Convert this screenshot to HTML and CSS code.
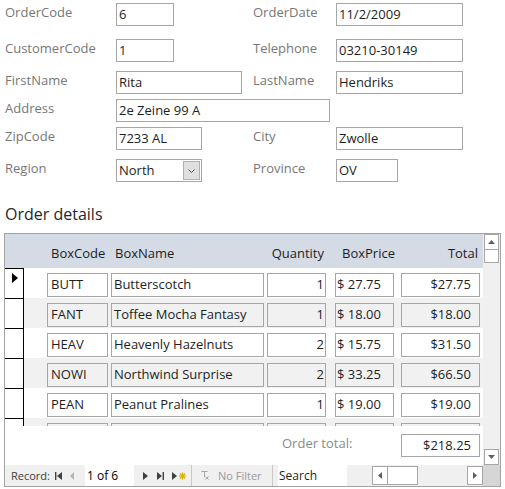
FILE: index.html
```html
<!DOCTYPE html>
<html>
<head>
<meta charset="utf-8">
<link rel="stylesheet" href="styles.css">
</head>
<body>
<div class="form">
  <div class="row r1">
    <span class="lbl">OrderCode</span>
    <span class="box w58">6</span>
    <span class="lbl">OrderDate</span>
    <span class="box w127">11/2/2009</span>
  </div>
  <div class="row r2">
    <span class="lbl">CustomerCode</span>
    <span class="box w58">1</span>
    <span class="lbl">Telephone</span>
    <span class="box w127">03210-30149</span>
  </div>
  <div class="row r3">
    <span class="lbl">FirstName</span>
    <span class="box w126">Rita</span>
    <span class="lbl">LastName</span>
    <span class="box w127">Hendriks</span>
  </div>
  <div class="row r4">
    <span class="lbl">Address</span>
    <span class="box w214 span3">2e Zeine 99 A</span>
  </div>
  <div class="row r5">
    <span class="lbl">ZipCode</span>
    <span class="box w86">7233 AL</span>
    <span class="lbl">City</span>
    <span class="box w127">Zwolle</span>
  </div>
  <div class="row r6">
    <span class="lbl">Region</span>
    <span class="combo">
      <span class="combo-val">North</span>
      <span class="combo-btn"><svg width="7" height="4" viewBox="0 0 7 4"><path d="M0.5 0.5 L3.5 3.5 L6.5 0.5" fill="none" stroke="#505050" stroke-width="1"/></svg></span>
    </span>
    <span class="lbl">Province</span>
    <span class="box w62">OV</span>
  </div>
</div>

<div class="title">Order details</div>

<div class="sub">
  <div class="main">
    <div class="hdr">
      <span class="spacer"></span>
      <span class="hc c-code">BoxCode</span>
      <span class="hc c-name">BoxName</span>
      <span class="hc c-qty">Quantity</span>
      <span class="hc c-price">BoxPrice</span>
      <span class="hc c-total">Total</span>
    </div>
    <div class="detail">
      <div class="drow">
        <span class="sel"><svg class="cur" width="6" height="10" viewBox="0 0 6 10"><path d="M0 0 L6 5 L0 10 Z" fill="#000"/></svg></span>
        <span class="cell c-code">BUTT</span>
        <span class="cell c-name">Butterscotch</span>
        <span class="cell c-qty">1</span>
        <span class="cell c-price">$ 27.75</span>
        <span class="cell c-total">$27.75</span>
      </div>
      <div class="drow alt">
        <span class="sel"></span>
        <span class="cell c-code">FANT</span>
        <span class="cell c-name">Toffee Mocha Fantasy</span>
        <span class="cell c-qty">1</span>
        <span class="cell c-price">$ 18.00</span>
        <span class="cell c-total">$18.00</span>
      </div>
      <div class="drow">
        <span class="sel"></span>
        <span class="cell c-code">HEAV</span>
        <span class="cell c-name">Heavenly Hazelnuts</span>
        <span class="cell c-qty">2</span>
        <span class="cell c-price">$ 15.75</span>
        <span class="cell c-total">$31.50</span>
      </div>
      <div class="drow alt">
        <span class="sel"></span>
        <span class="cell c-code">NOWI</span>
        <span class="cell c-name">Northwind Surprise</span>
        <span class="cell c-qty">2</span>
        <span class="cell c-price">$ 33.25</span>
        <span class="cell c-total">$66.50</span>
      </div>
      <div class="drow">
        <span class="sel"></span>
        <span class="cell c-code">PEAN</span>
        <span class="cell c-name">Peanut Pralines</span>
        <span class="cell c-qty">1</span>
        <span class="cell c-price">$ 19.00</span>
        <span class="cell c-total">$19.00</span>
      </div>
      <div class="drow alt">
        <span class="sel"></span>
        <span class="cell c-code"></span>
        <span class="cell c-name"></span>
        <span class="cell c-qty"></span>
        <span class="cell c-price"></span>
        <span class="cell c-total"></span>
      </div>
    </div>
    <div class="foot">
      <span class="foot-lbl">Order total:</span>
      <span class="cell foot-total">$218.25</span>
    </div>
  </div>

  <div class="vscroll">
    <span class="sb-btn"><svg width="7" height="4" viewBox="0 0 7 4"><path d="M0 4 L3.5 0 L7 4 Z" fill="#606060"/></svg></span>
    <span class="sb-thumb"></span>
    <span class="sb-track"></span>
    <span class="sb-btn"><svg width="7" height="4" viewBox="0 0 7 4"><path d="M0 0 L3.5 4 L7 0 Z" fill="#606060"/></svg></span>
  </div>

  <div class="nav">
    <span class="nav-lbl">Record:</span>
    <span class="nb w15"><svg width="7" height="8" viewBox="0 0 7 8"><rect x="0" y="0" width="1.4" height="8" fill="#404040"/><path d="M7 0 L2 4 L7 8 Z" fill="#404040"/></svg></span>
    <span class="nb w15"><svg width="4" height="8" viewBox="0 0 4 8"><path d="M4 0 L0 4 L4 8 Z" fill="#b4b4b4"/></svg></span>
    <span class="nav-input">1 of 6</span>
    <span class="nb gap9"></span>
    <span class="nb w14"><svg width="5" height="8" viewBox="0 0 5 8"><path d="M0 0 L5 4 L0 8 Z" fill="#404040"/></svg></span>
    <span class="nb w15"><svg width="7" height="8" viewBox="0 0 7 8"><path d="M0 0 L5 4 L0 8 Z" fill="#404040"/><rect x="5.6" y="0" width="1.4" height="8" fill="#404040"/></svg></span>
    <span class="nb w19"><svg width="14" height="8" viewBox="0 0 14 8"><path d="M0 0 L5 4 L0 8 Z" fill="#404040"/><g stroke="#e0b000" stroke-width="1.2"><path d="M10.5 0.5 V7.5"/><path d="M7 4 H14"/><path d="M8 1.5 L13 6.5"/><path d="M13 1.5 L8 6.5"/></g></svg></span>
    <span class="nav-sep"></span>
    <span class="nb gap9"></span>
    <span class="nb w17 left"><svg width="8" height="9" viewBox="0 0 8 9"><g stroke="#a8a8a8" stroke-width="1" fill="none"><path d="M0.5 0.5 H6.5"/><path d="M3.5 0.5 V6"/><path d="M4.5 5.5 L7.5 8.5"/><path d="M7.5 5.5 L4.5 8.5"/></g></svg></span>
    <span class="nav-filter">No Filter</span>
    <span class="nav-sep"></span>
    <span class="nb gap5"></span>
    <span class="nav-search">Search</span>
    <span class="nb gap25"></span>
    <span class="hscroll">
      <span class="hb"><svg width="4" height="7" viewBox="0 0 4 7"><path d="M4 0 L0 3.5 L4 7 Z" fill="#606060"/></svg></span>
      <span class="hthumb"></span>
      <span class="htrack"></span>
      <span class="hb"><svg width="4" height="7" viewBox="0 0 4 7"><path d="M0 0 L4 3.5 L0 7 Z" fill="#606060"/></svg></span>
    </span>
  </div>
  <div class="corner"></div>
</div>
</body>
</html>
```

FILE: styles.css
```css
* { box-sizing: border-box; }

body {
  margin: 0;
  width: 505px;
  height: 489px;
  overflow: hidden;
  background: #fff;
  font-family: "Open Sans", "Segoe UI", sans-serif;
  font-size: 13px;
  color: #1e1e1e;
}

/* ---------- main form ---------- */
.form { padding: 3px 0 0 5px; }

.row {
  display: grid;
  grid-template-columns: 111px 137px 83px 1fr;
  height: 23px;
  align-items: start;
}
.r2 { margin-top: 13px; }
.r3 { margin-top: 9px; }
.r4 { margin-top: 5px; }
.r5 { margin-top: 5px; }
.r6 { margin-top: 9px; }

.lbl {
  color: #777;
  line-height: 18px;
  white-space: nowrap;
}

.box {
  display: block;
  height: 23px;
  border: 1px solid #a6a6a6;
  padding: 0 2px;
  line-height: 20px;
  white-space: nowrap;
  overflow: hidden;
}
.w58 { width: 58px; }
.w62 { width: 62px; }
.w86 { width: 86px; }
.w126 { width: 126px; }
.w127 { width: 127px; }
.w214 { width: 214px; }
.span3 { grid-column: 2 / 5; }

.combo {
  display: flex;
  width: 86px;
  height: 23px;
  border: 1px solid #a6a6a6;
}
.combo-val {
  flex: 1;
  padding-left: 2px;
  line-height: 20px;
}
.combo-btn {
  width: 17px;
  margin: 1px 1px 1px 0;
  background: #e0e0e0;
  border: 1px solid #b0b0b0;
  display: flex;
  align-items: center;
  justify-content: center;
}

.title {
  margin-top: 21px;
  padding-left: 5px;
  font-size: 16px;
  line-height: 22px;
  color: #262626;
}

/* ---------- subform ---------- */
.sub {
  margin: 8px 0 0 4px;
  width: 497px;
  height: 254px;
  border: 1px solid #a3a3a3;
  display: grid;
  grid-template-columns: 478px 17px;
  grid-template-rows: 231px 21px;
}

.main {
  display: flex;
  flex-direction: column;
  overflow: hidden;
}

.hdr {
  height: 34px;
  flex: none;
  background: #d5dbe5;
  display: flex;
  align-items: flex-start;
  padding-top: 10px;
}
.spacer { width: 19px; flex: none; }

.hc { flex: none; white-space: nowrap; line-height: 18px; color: #1e1e1e; }

.c-code  { width: 61px;  margin-left: 23px; }
.c-name  { width: 153px; margin-left: 3px; }
.c-qty   { width: 59px;  margin-left: 3px; text-align: right; }
.c-price { width: 59px;  margin-left: 9px; }
.c-total { width: 79px;  margin-left: 7px; text-align: right; }

.hc.c-code  { padding-left: 4px; }
.hc.c-name  { padding-left: 4px; }
.hc.c-qty   { padding-right: 2px; }
.hc.c-price { padding-left: 7px; }
.hc.c-total { padding-right: 2px; }

.detail {
  height: 158px;
  flex: none;
  overflow: hidden;
}

.drow {
  display: flex;
  height: 30px;
  align-items: flex-start;
}
.drow.alt { background: #f1f1f1; }

.sel {
  width: 19px;
  height: 30px;
  flex: none;
  background: #fff;
  border-right: 1px solid #000;
  border-top: 1px solid #000;
  padding: 4px 0 0 7px;
}
.cur { display: block; }

.cell {
  flex: none;
  margin-top: 5px;
  height: 24px;
  border: 1px solid #a6a6a6;
  line-height: 21px;
  white-space: nowrap;
  overflow: hidden;
}
.cell.c-code  { padding-left: 3px; }
.cell.c-name  { padding-left: 2px; }
.cell.c-qty   { padding-right: 1px; }
.cell.c-price { padding-left: 1px; }
.cell.c-total { padding-right: 8px; }

.foot {
  flex: 1;
  display: flex;
  align-items: flex-start;
  padding-top: 8px;
}
.foot-lbl {
  margin-left: 277px;
  line-height: 18px;
  color: #8a8a8a;
}
.foot-total {
  margin-top: 0;
  margin-left: auto;
  margin-right: 3px;
  width: 79px;
  height: 23px;
  line-height: 20px;
  text-align: right;
  padding-right: 8px;
}

/* vertical scrollbar */
.vscroll {
  display: flex;
  flex-direction: column;
  background: #f0f0f0;
}
.sb-btn {
  height: 16px;
  flex: none;
  margin: 0 1px;
  background: #fff;
  border: 1px solid #a6a6a6;
  display: flex;
  align-items: center;
  justify-content: center;
}
.sb-thumb {
  height: 13px;
  flex: none;
  margin: 0 1px;
  background: #fff;
  border: 1px solid #a6a6a6;
  border-top: none;
}
.sb-track { flex: 1; }

/* navigation bar */
.nav {
  display: flex;
  align-items: stretch;
  background: #f0f0f0;
  font-size: 11px;
  line-height: 21px;
}
.nav-lbl {
  width: 50px;
  padding-left: 6px;
  color: #3c3c3c;
  white-space: nowrap;
}
.nb {
  flex: none;
  display: flex;
  align-items: center;
}
.w14 { width: 14px; }
.w15 { width: 15px; }
.w17 { width: 17px; }
.w19 { width: 19px; }
.gap5 { width: 5px; }
.gap9 { width: 9px; }
.gap25 { width: 25px; }

.nav-input {
  width: 49px;
  flex: none;
  background: #fff;
  padding-left: 2px;
  color: #000;
  font-size: 12px;
}
.nav-sep {
  width: 1px;
  flex: none;
  background: #c8c8c8;
}
.nav-filter {
  width: 54px;
  flex: none;
  color: #9a9a9a;
  white-space: nowrap;
}
.nav-search {
  width: 69px;
  flex: none;
  background: #fff;
  padding-left: 1px;
  color: #1e1e1e;
  font-size: 12px;
}

.hscroll {
  width: 111px;
  flex: none;
  display: flex;
  background: #f0f0f0;
  padding: 1px 0;
}
.hb {
  width: 16px;
  flex: none;
  background: #fff;
  border: 1px solid #a6a6a6;
  display: flex;
  align-items: center;
  justify-content: center;
}
.hthumb {
  width: 30px;
  flex: none;
  background: #fff;
  border: 1px solid #a6a6a6;
  border-left: none;
}
.htrack { flex: 1; }

.corner { background: #d6d6d6; }
```
